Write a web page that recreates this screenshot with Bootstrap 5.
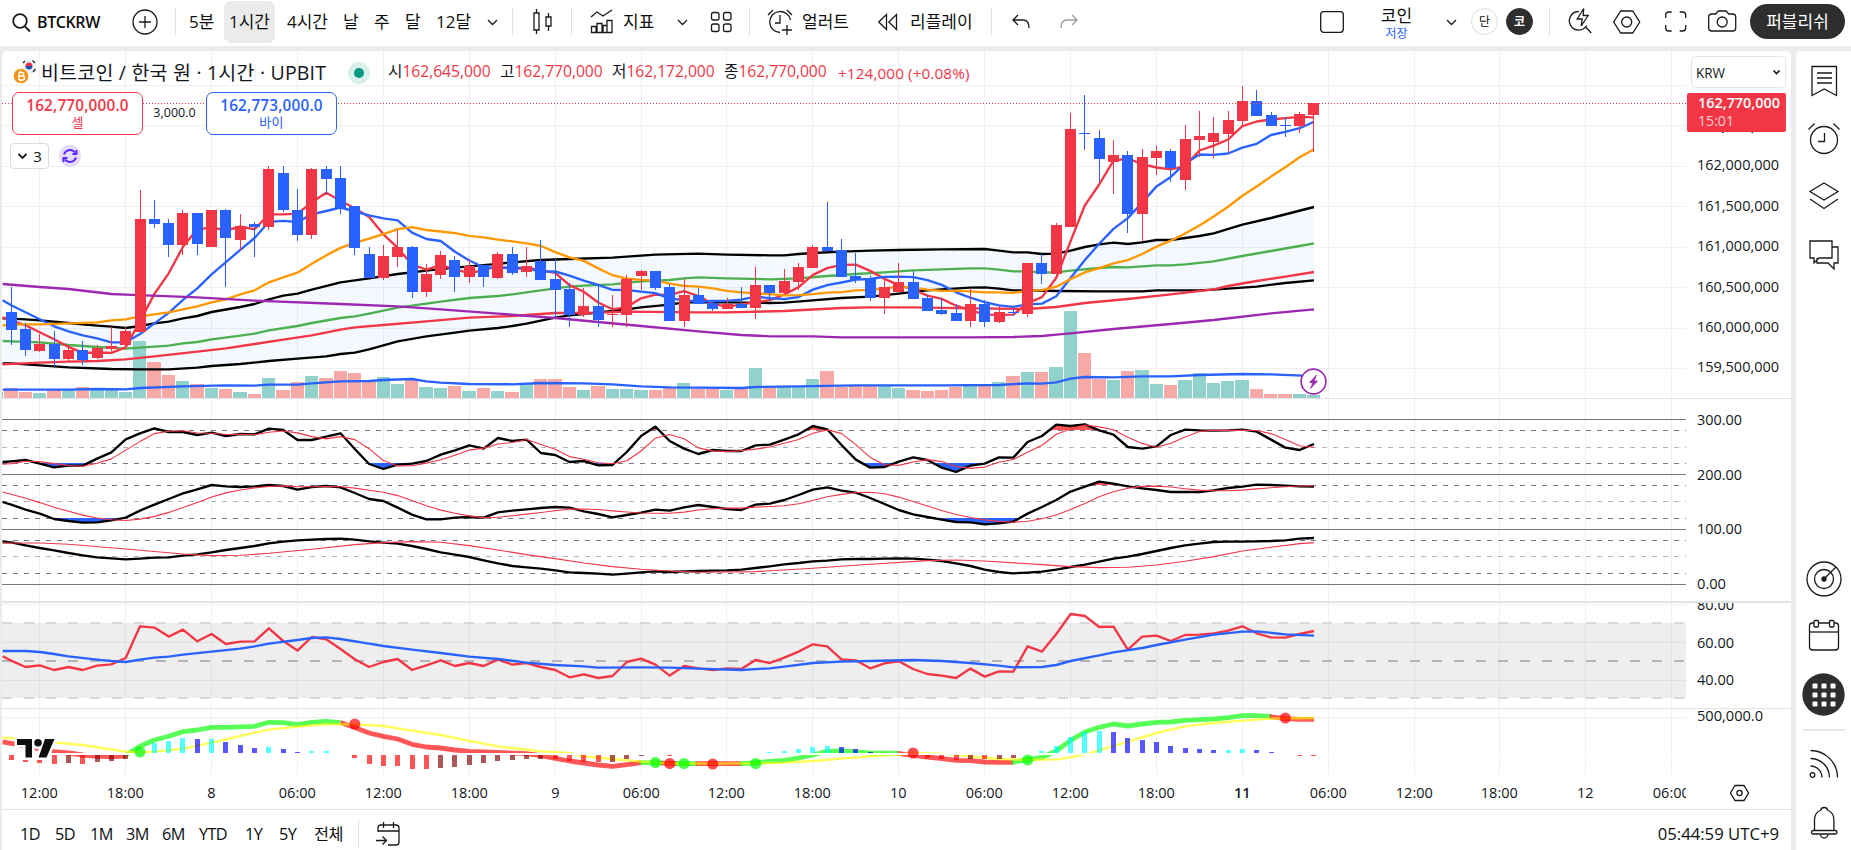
<!DOCTYPE html>
<html lang="ko">
<head>
<meta charset="utf-8">
<title>BTCKRW</title>
<link rel="stylesheet" href="https://cdn.jsdelivr.net/npm/bootstrap@5.3.0/dist/css/bootstrap.min.css">
<script src="https://cdn.jsdelivr.net/npm/bootstrap@5.3.0/dist/js/bootstrap.bundle.min.js"></script>
<style>
html,body{height:100%;overflow:hidden}
body{background:#ebebeb;font-family:"Open Sans","Noto Sans CJK KR",sans-serif;color:#0f0f0f;font-size:16px;line-height:1}
svg{display:block;fill:none;stroke:#1a1a1a;stroke-width:1.3}
svg.bare{stroke:none}
svg.swap{stroke:#5b21ff;stroke-width:1.9}
svg text{stroke:none;fill:#131722;font-size:14.5px}
.topbar{height:46px;font-weight:400;font-size:17px;padding-bottom:3px}
.topbar>*,.ranges>*{flex:none;white-space:nowrap}
.vline{width:1px;height:28px;background:#e2e2e2}
.picked{width:51px;height:42px;border-radius:7px;background:#ebebeb}
.t-sym{width:93px;font-size:16px;font-weight:600;letter-spacing:-.4px}
.t-m5{width:35px}.t-h4{width:56px}.t-d1{width:31px}.t-m12{width:51px}
.layname{width:67px;font-size:17px}
.layname small{font-size:12px;color:#2962ff}
.dot26{width:27px;height:27px;font-size:12px;border:1px solid #dcdcdc}
.dot26.dark{background:#2e2e2e;color:#fff;border-color:#2e2e2e;font-weight:600}
.publish{width:95px;height:35px;border-radius:18px;background:#2e2e2e;color:#fff;font-size:17px}
.workarea{margin-top:5px;height:799px;gap:5px;padding-left:2px}
.chartpane{width:1789px;border-radius:5px 5px 0 0;overflow:hidden}
.sidebar{width:55px;border-radius:5px 0 0 0;padding-top:1px}
.sidebar>.cell{height:57.6px}
.side-rule{width:42px;height:2px;background:#e6e6e6;margin:6px 0 4px}
.legend{left:10px;top:0;height:44px;font-size:19.5px;font-weight:400;color:#131722}
.legend .name{width:302px;letter-spacing:.2px;padding-left:3px}
.ohlc{font-size:15.7px;letter-spacing:-.05px;margin-left:-2px}
.ohlc b{font-weight:400;color:#f23645}
.ohlc .o1{width:112px}
.ohlc .o2{padding-top:2px;padding-left:2px;font-size:15.3px;letter-spacing:.1px}
.livedot{width:22px;height:22px;background:#daf0ec}
.livedot i{width:10px;height:10px;background:#089981}
.quotes{left:10px;top:41px}
.quote{width:131px;height:43px;border:1px solid;border-radius:7px;font-weight:600;font-size:15.3px;letter-spacing:.2px;gap:3px}
.quote span{font-size:13px;font-weight:400}
.sell{color:#f23645}.buy{color:#2962ff}
.spread{width:63px;font-size:12.5px;color:#131722}
.fold{left:8px;top:92px}
.fold .boxed{width:39px;height:26px;border:1px solid #dcdcdc;border-radius:4px;font-size:15px;gap:5px}
.fold .round{width:22px;height:22px;background:#e4dcfb;margin-left:10px}
.ranges{height:41px;border-top:1px solid #e3e3e6;padding-left:18px;padding-top:8px;font-size:16.3px;letter-spacing:-.6px}
.clock{letter-spacing:0;padding-right:12px;font-size:16.7px}
.r1{width:35px}.r2{width:36px}.r3{width:37px}.r4{width:46px}.r5{width:34px}
</style>
</head>
<body>
<header class="topbar bg-white d-flex align-items-center">
  <svg width="37" height="43" style="stroke-width:1.8"><circle cx="20" cy="21" r="6.8"/><path d="M25 26.5l5 5"/></svg>
  <div class="t-sym">BTCKRW</div>
  <svg width="45" height="43"><circle cx="15" cy="22" r="12"/><path d="M9 22h12M15 16v12"/></svg>
  <div class="vline"></div>
  <div class="d-flex align-items-center" style="padding-left:13px">
    <div class="t-m5">5분</div>
    <div class="picked d-flex align-items-center justify-content-center">1시간</div>
    <div class="t-h4 ps-2 ms-1">4시간</div>
    <div class="t-d1 ms-2">날</div><div class="t-d1">주</div><div class="t-d1">달</div><div class="t-m12">12달</div>
  </div>
  <svg width="25" height="43"><path d="M1 20l4.500 4.500 4.500-4.500"/></svg>
  <div class="vline"></div>
  <svg width="58" height="43"><path d="M21 13h5v17h-5zM23.500 9v4M23.500 30v4M33 17h5v9h-5zM35.500 13v4M35.500 26v5"/></svg>
  <div class="vline"></div>
  <svg width="51" height="43"><path d="M19 17l6-5 6 4 9-6M19.500 32.500v-6h4.500v6zM25 32.500v-9h5v9M31 32.500v-7h4v7M35 32.500v-12h5v12zM19 32.500h21"/></svg>
  <div style="width:54px">지표</div>
  <svg width="72" height="43"><path d="M1 20l4.500 4.500 4.500-4.500"/><rect x="34.500" y="12.500" width="7.500" height="7.500" rx="2"/><rect x="46.500" y="12.500" width="7.500" height="7.500" rx="2"/><rect x="34.500" y="24" width="7.500" height="7.500" rx="2"/><rect x="46.500" y="24" width="7.500" height="7.500" rx="2"/></svg>
  <div class="vline"></div>
  <svg width="52" height="43"><path d="M30 32.500A10.500 10.500 0 1 1 40.500 20M18 15l5-5M42 15l-5-5M30 15v8h-5M37 25v10M32 30h10"/></svg>
  <div style="width:76px">얼러트</div>
  <svg width="32" height="43"><path d="M8.500 14.500v15L.8 22zM18.500 14.500v15L10.800 22z"/></svg>
  <div style="width:81px">리플레이</div>
  <div class="vline"></div>
  <svg width="328" height="43"><path d="M26 15l-5 5 5 5M21 20h10q6 0 6 8"/><g stroke="#9a9a9a"><path d="M80 15l5 5-5 5M85 20H75q-6 0-6 8"/></g></svg>
  <svg width="43" height="43"><rect x=".7" y="11.700" width="22.600" height="20.600" rx="3"/></svg>
  <div class="layname text-center me-3"><div class="pt-1">코인</div><small class="d-block mt-1">저장</small></div>
  <svg width="25" height="43"><path d="M1 20l4.500 4.500 4.500-4.500"/></svg>
  <div class="dot26 rounded-circle d-flex align-items-center justify-content-center">단</div>
  <div class="dot26 dark rounded-circle d-flex align-items-center justify-content-center ms-2 me-3">코</div>
  <div class="vline"></div>
  <svg width="200" height="43">
    <g transform="translate(.7 0)"><path d="M28 11.500a9.300 9.300 0 1 0 8 14M35 27l5.500 6M33 8.500l-6.500 10.500h5l-1 7 7-10.500h-5z"/>
    <path d="M70 11h12l7 11-7 11H70l-7-11z"/><circle cx="76" cy="22" r="5"/>
    <path d="M115 18v-3q0-3 3-3h3M129 12h3q3 0 3 3v3M135 25v3q0 3-3 3h-3M121 31h-3q-3 0-3-3v-3"/>
    <path d="M158 17q0-3 3-3h4l2.500-3h8l2.500 3h4q3 0 3 3v11q0 3-3 3h-21q-3 0-3-3z"/><circle cx="171.500" cy="22" r="5"/></g>
  </svg>
  <div class="publish d-flex align-items-center justify-content-center">퍼블리쉬</div>
</header>

<main class="workarea d-flex">
  <section class="chartpane bg-white d-flex flex-column position-relative">
    <svg id="chart" width="1789" height="758" viewBox="2 51 1789 758"></svg>
    <div class="legend position-absolute d-flex align-items-center">
      <svg class="bare" width="26" height="28"><circle cx="17" cy="8" r="7.500" fill="#f0f1f5"/><path d="M13.500 7a3.500 3.500 0 0 1 7 0z" fill="#e8304a"/><path d="M13.500 7a3.500 3.500 0 0 0 7 0z" fill="#2450b8"/><path d="M11 4l2-2M20.500 1.500l2.500 2.500M21 13l2.500-3" stroke="#333" stroke-width="1.500"/><circle cx="9" cy="17" r="8" fill="#f7931a" stroke="#fff"/><path d="M7 13.500v7.500M7 13.500h3a1.700 1.700 0 0 1 0 3.500H7h3.500a2 2 0 0 1 0 4H7M8.500 11.500v2M8.500 21v1.500" stroke="#fff" stroke-width="1.400"/></svg>
      <div class="name">비트코인 / 한국 원 · 1시간 · UPBIT</div>
      <div class="livedot rounded-circle d-flex align-items-center justify-content-center ms-2 me-3"><i class="rounded-circle"></i></div>
      <div class="ohlc d-flex ps-1"><div class="o1">시<b>162,645,000</b></div><div class="o1">고<b>162,770,000</b></div><div class="o1">저<b>162,172,000</b></div><div class="o1">종<b>162,770,000</b></div><div class="o2"><b>+124,000 (+0.08%)</b></div></div>
    </div>
    <div class="quotes position-absolute d-flex align-items-center">
      <div class="quote sell bg-white d-flex flex-column align-items-center justify-content-center">162,770,000.0<span>셀</span></div>
      <div class="spread text-center">3,000.0</div>
      <div class="quote buy bg-white d-flex flex-column align-items-center justify-content-center">162,773,000.0<span>바이</span></div>
    </div>
    <div class="fold position-absolute d-flex align-items-center">
      <div class="boxed bg-white d-flex align-items-center justify-content-center"><svg width="11" height="8" style="stroke-width:1.800"><path d="M1.500 2l4 4 4-4"/></svg>3</div>
      <div class="round rounded-circle d-flex align-items-center justify-content-center"><svg class="swap" width="18" height="18"><path d="M3 7.500a6.300 6.300 0 0 1 11-2M15 10.500a6.300 6.300 0 0 1-11 2M15.500 3v4h-4M2.500 15v-4h4"/></svg></div>
    </div>
    <footer class="ranges d-flex align-items-center">
      <div class="r1">1D</div><div class="r1">5D</div><div class="r2">1M</div><div class="r2">3M</div><div class="r3">6M</div><div class="r4">YTD</div><div class="r5">1Y</div><div class="r1">5Y</div><div style="width:44px">전체</div>
      <div class="vline"></div>
      <svg width="60" height="38"><path d="M19 17v-4q0-3 3-3h15q3 0 3 3v14q0 3-3 3h-8M19 16h21M24.500 7v6M34.500 7v6M17 25.500h10M23.500 21.500l4 4-4 4"/></svg>
      <div class="clock ms-auto">05:44:59 UTC+9</div>
    </footer>
  </section>

  <aside class="sidebar bg-white d-flex flex-column align-items-center">
    <div class="cell d-flex align-items-center"><svg width="36" height="36"><path d="M6 3.500h24.500v29l-12.300-6.500L6 32.500zM11 10h15M11 15h15M11 20h15"/></svg></div>
    <div class="cell d-flex align-items-center"><svg width="36" height="36"><circle cx="18" cy="20" r="13.500"/><path d="M18.500 13v8.500H12M2.500 9.500l6-6M33.500 9.500l-6-6"/></svg></div>
    <div class="cell d-flex align-items-center"><svg width="36" height="36"><path d="M18 5l14 8.500-14 8.500-14-8.500zM4 21l14 9.500L32 21"/></svg></div>
    <div class="cell d-flex align-items-center"><svg width="36" height="36"><path d="M4 5h22v17H13l-5 5v-5H4zM11 22v5h11l6 6v-6h4V11h-6"/></svg></div>
    <div class="cell d-flex align-items-center mt-auto"><svg width="36" height="36"><circle cx="18" cy="18" r="17"/><circle cx="18" cy="18" r="9.500"/><circle cx="18" cy="18" r="2" fill="#1a1a1a"/><path d="M18 18L30 6"/></svg></div>
    <div class="cell d-flex align-items-center"><svg width="36" height="36"><rect x="3.500" y="5" width="29" height="27" rx="3"/><path d="M3.500 14h29"/><rect x="8" y="2.500" width="4.500" height="6.500" rx="1" fill="#fff"/><rect x="23.500" y="2.500" width="4.500" height="6.500" rx="1" fill="#fff"/></svg></div>
    <div class="cell d-flex align-items-center"><svg class="bare" width="43" height="43"><circle cx="21.500" cy="21.500" r="21.200" fill="#2e2e2e"/><g fill="#fff" id="nine"></g></svg></div>
    <div class="side-rule"></div>
    <div class="cell d-flex align-items-center"><svg width="36" height="36"><circle cx="6.500" cy="29" r="2.300"/><path d="M4.500 20a11.500 11.500 0 0 1 11.500 11.500M4.500 12.500a19 19 0 0 1 19 19M4.500 4.500a27 27 0 0 1 27 27"/></svg></div>
    <div class="cell d-flex align-items-center"><svg width="36" height="36"><g transform="translate(0 1.500)"><path d="M8.500 26V15q0-7 6.500-9.500 0-2.500 3.200-2.500t3.200 2.500q6.500 2.500 6.500 9.500v11"/><rect x="5.500" y="26" width="25.500" height="3.500" rx="1.700"/><path d="M14.500 30q.5 3.500 3.700 3.500T22 30"/></g></svg></div>
  </aside>
</main>

<script>
const RED='#f23645',BLUE='#2962ff',X0=10.7,STEP=14.316,R=1686,LW=2.35;
const px=i=>X0+STEP*i, c=i=>Math.round(px(i));
let out='';
const add=s=>out+=s;
const rect=(x,y,w,h,f,o='')=>add(`<rect x="${x}" y="${y}" width="${w}" height="${h}" fill="${f}" stroke="none" ${o}/>`);
const hl=(y,col,w=1,dash='',x2=R)=>add(`<path d="M2 ${y}H${x2}" stroke="${col}" stroke-width="${w}" ${dash?`stroke-dasharray="${dash}"`:''}/>`);
const text=(x,y,s,o='')=>add(`<text x="${x}" y="${y}" ${o}>${s}</text>`);
const pts=a=>a.map(([i,y])=>(px(i)+.5).toFixed(1)+','+(y+.3).toFixed(1)).join(' ');
const line=(a,col,w,o='')=>add(`<polyline points="${pts(a)}" stroke="${col}" stroke-width="${w}" stroke-linejoin="round" ${o}/>`);
const sp=s=>s.trim().split(/\s+/).map(p=>p.split(':').map(Number));
const num=s=>s.trim().split(/[\s,]+/).map(Number);
const seq=(a,f=v=>v)=>a.map((v,i)=>[i,f(v)]);

// colour, high, body top, body bottom, low
const candles=`b287,312,330,345 b323,329,350,356 r334,344,351,352 b331,344,359,366 r347,350,359,361 b341,350,360,365 r345,348,358,359 r327,346,349,351 r327,331,345,346 r190,219,332,332
b200,219,224,228 b219,223,245,257 r210,213,245,255 b213,213,244,255 r210,210,247,247 b209,210,238,287 r214,226,240,251 b222,224,227,257 r166,169,227,230 b166,173,210,212
b189,210,235,241 r168,169,235,239 b166,169,179,194 b166,178,209,214 b206,206,248,255 b247,254,278,278 r245,256,278,280 r230,247,257,267 b246,247,292,298 r264,274,292,297
r251,255,275,279 b256,260,277,292 r259,266,277,283 b265,265,277,287 r252,254,278,279 b247,254,273,275 r247,266,272,277 b240,261,280,280 b259,279,290,317 b283,289,315,327
r288,306,315,317 b284,306,320,327 r295,314,315,327 r275,279,315,327 r270,271,276,290 b271,271,288,290 b284,287,321,321 r279,295,321,327 b288,295,304,304 b302,303,309,311
r298,304,309,309 b287,304,308,308 r267,285,308,319 b285,285,293,301 r269,281,293,294 r263,267,282,290 r245,247,268,268 b202,247,251,251 b239,250,277,277 b253,276,280,283
b276,279,298,301 r278,287,298,314 r263,282,292,292 b271,282,299,299 b295,298,311,311 b298,310,314,315 b304,313,321,321 r288,304,321,327 b300,304,322,327 r306,312,322,323
b307,312,313,316 r263,263,314,317 b254,263,274,284 r223,225,274,274 r113,129,227,227 b95,133,134,150 b130,138,159,182 r140,155,162,194 b151,155,214,233 r149,157,214,241
r146,151,158,175 b149,151,168,182 r125,139,180,190 r111,136,140,157 r117,133,142,158 r111,120,134,153 r86,101,121,125 b90,101,116,116 b112,115,126,126 b117,125,126,137 r112,114,126,133 r103,103,115,152`
.trim().split(/\s+/).map(s=>[s[0],...s.slice(1).split(',').map(Number)]);
const close=candles.map(k=>k[0]=='r'?k[2]:k[3]);
const sma=(src,n,head)=>src.map((_,i)=>[i,i<head.length?head[i]:src.slice(i-n+1,i+1).reduce((a,b)=>a+b)/n]);

// grid
const gx=[39,125,211,297,383,469,555,641,726,812,898,984,1070,1156,1242,1328,1414,1499,1585,1671];
gx.forEach(x=>rect(x,51,1,724,'#f0f0f1'));
[85,125,166,206,247,287,328,368,604,642,680,717].forEach(y=>rect(2,y,R-2,1,'#f0f0f1'));

// main pane overlays
const up=sp(`-.6:318 0:318.3 1:319 2:320 4:322.7 6:325.3 7:326.3 8:327.7 9:325.7 10:323 11:321.3 12:318 13:315.7 14:311.7 16:306.7 17:303.7 18:299 19:295.3 20:293.3 21:289.3 23:282 25:278 27:273.7 29:270.3 31:267.3 34:263.5 35:262 37:259.7 39:258.7 42:257.3 43:256.3 45:254.3 48:253.3 50:254.3 53:255 54:255 55:253.7 56:252.7 58:251.3 60:250.3 62:249.7 65:249 68:248.7 69:250.3 70:252 71:252 72:253.7 73:253.3 74:250.3 75:246.7 76:244 77:242.3 78:243.7 79:242 80:239.7 81:239.7 82:237.7 83:235.7 84:233 86:224.3 88:217.7 91:206.7`);
const lo=sp(`-.6:363 0:363 2:365 4:367 7:368.7 9:369 11:369 13:367.3 14:365.7 16:363.7 18:360.7 20:358.3 22:356 23:353.7 24:352.3 25:349 27:341 29:336 31:332.3 32:330.3 34:327.7 35:325.7 36:323.3 37:320.3 38:317.3 39:315 40:313.7 41:312 42:310.7 43:309 44:307 46:304.3 47:302 50:302 53:302.7 54:302.3 56:300 58:297.7 60:296.3 62:293.3 64:290 65:289 67:287.3 68:287 69:288.3 70:290 71:290 73:290.7 76:291 79:291 80:290 83:290 84:289.3 87:286.3 89:282.7 91:280`);
add(`<polygon points="${pts(up)} ${pts([...lo].reverse())}" fill="#2196f3" fill-opacity=".055" stroke="none"/>`);
const vol=`r388 r392 g393 r390 g390 r387 g390 g390 g392 g341 r362 r375 g381 r384 g388 r389 g392 r394 g378 r390 r382 g376 r378 r371 r373 r380 g377 g384 r380 g387 g388 r386 g391 r388 g391 r392 g384 r379 r379 r387 g390 r386 g389 g389 g390 r390 r387 g383 r389 r389 g390 r389 g368 r387 g387 g387 g379 r371 r387 r386 r386 g386 g388 r390 r391 r390 r387 g386 r385 g382 r376 g372 r372 g367 g311 r353 r379 g380 r371 g370 g384 r385 g380 g373 g383 g381 g380 r389 r394 r394 g394 g395`.split(' ');
rect(2,392,1,6,'#92d2cc');
vol.forEach((v,i)=>{const x=Math.round(px(i)-6.4),n=Math.round(px(i+1)-6.4),y=+v.slice(1);rect(x,y,n-x-1,398-y,v[0]=='r'?'#f7a9a7':'#92d2cc')});
line(sp(`-.6:389.3 4:389.3 6:388.7 8:389 9:387.7 12:386 15:385 17:385.3 18:384.3 20:384.3 21:383 23:381 25:380.7 26:379.7 28:378.7 29:381 30:382.3 32:383.7 35:384 37:382.7 40:383 42:384 44:386 46:387 51:387.7 52:386.7 55:386 59:385 65:385 69:384.7 71:383 72:383.3 73:382 74:378.3 75:376.7 77:377 79:376 81:376 83:374.7 86:373.7 88:374 90.2:375.3`),BLUE,LW);
line(up,'#000',LW);line(lo,'#000',LW);
line(sp(`-.6:340.7 0:341 2:342 4:344.7 6:346.7 8:348.3 9:347.3 11:345.3 12:343 13:341.7 14:339 16:335.3 17:333.3 18:330 20:325.7 21:322.7 23:317.7 24:316 25:313.3 27:307.3 28:305.3 30:301.3 32:297.7 34:295.7 35:294 36:292 38:288 39:286.3 40:285.3 42:284 44:281 46:279.7 47:278 48:277 50:278 53:279 55:278 57:275.7 59:273.7 61:272 63:270 65:269 67:268 68:268 69:269.3 70:271 71:271 72:272 73:272 74:270.3 76:267.7 77:266.7 78:267 80:265 81:265 82:264 84:261 86:255.7 88:250.7 90:245.7 91:243`),'#4caf50',LW);
line([[-.6,317],...sma(close,5,[320,325,332,339])],RED,LW);
line([[-.6,300],...sma(close,10,[305,312,319,326,331,335,338,342,342])],BLUE,LW);
line([[-.6,325],...sma(close,20,[324.5,324,324,323.5,323,322.5,322,320,319,316,314,312,309,306,302,299,294,290,282])],'#ff9800',LW);
line(sp(`-.6:364 2:362.3 4:361.3 6:360.7 8:359 10:356 13:351.3 15:348 17:343.7 19:339.3 21:335 23:329.3 24:327 26:324.7 29:321 32:317.3 35:315.7 38:312.7 41:312.3 43:311.3 48:312 50:312 54:310.7 58:307.7 60:307 63:307 67:308 71:308.7 73:306.7 75:302.7 78:298.7 81:294 84:289 85:285.7 87:280.7 89:276.3 91:271.7`),RED,LW);
line(sp(`-.6:283.7 2:286.7 4:288.7 7:293.7 8:294.3 13:297 17:300.3 23:303.7 27:306 30:309 34:313.3 38:317.7 44:325.7 48:331 51:334.7 53:336 56:336 58:337 67:337 70:336.7 72:335.7 73:334.3 74:333 77:328.7 81:323.7 84:319.7 88:313 91:309`),'#9c27b0',LW);
candles.forEach(([k,h,t,b,l],i)=>{const f=k=='r'?RED:BLUE;rect(c(i),h,1,Math.max(1,l-h),f);rect(c(i)-5,t,11,Math.max(1,b-t),f)});
add(`<path d="M2 103.500H${R}" stroke="${RED}" stroke-width="1" stroke-dasharray="1 2"/>`);
add(`<circle cx="1313.500" cy="381.500" r="12.400" fill="#fff" stroke="#9c27b0" stroke-width="1.600"/><path d="M1316.500 375l-7 7.500h3.500l-2.500 6 7-7.500h-3.500l2.500-6z" fill="#9c27b0" stroke="#9c27b0" stroke-width=".8"/>`);
hl(398.5,'#e0e3eb',1,'',1791);

// stochastic pane
[[430.5,447.5,463.5],[485.5,501.5,518.5],[540.5,556.5,573.5]].forEach(r=>r.forEach((y,j)=>hl(y,j==1?'#b2b2b8':'#787885',1,'5 6')));
const K1=num(`183,179,190,201,196,196,175,156,117,99,84,95,95,104,97,107,101,102,85,89,119,119,109,99,146,191,206,193,190,182,163,150,135,145,113,122,118,158,164,185,182,195,194,155,107,79,122,145,161,149,152,152,135,133,118,102,77,87,134,178,202,200,184,171,179,202,215,196,190,171,172,125,107,73,77,72,90,103,140,145,138,104,88,90,91,90,88,94,118,142,149,131`);
const K2=num(`313,328,340,356,362,367,366,360,352,331,313,296,279,267,254,258,260,258,254,257,268,260,257,261,278,296,302,322,343,357,357,352,350,352,336,331,327,323,320,322,333,341,351,344,337,328,331,321,314,320,326,329,313,310,299,284,268,261,271,277,293,311,329,342,350,358,365,366,372,369,364,340,320,299,274,259,244,250,258,264,269,275,275,275,270,263,259,253,254,256,258,259`);
const K3=num(`426,435,443,450,458,465,471,474,477,475,472,471,466,462,456,449,443,437,429,424,420,418,416,415,418,423,427,430,437,446,456,463,470,480,489,497,501,505,510,516,518,520,523,520,516,513,515,513,512,511,510,508,503,498,492,488,483,481,477,476,476,475,474,475,478,482,489,497,508,515,519,517,514,508,500,493,484,475,469,461,452,443,435,430,425,424,424,423,422,420,415,413`);
const z=v=>400+v/3;
add(`<defs><clipPath id="u1"><path d="M2 419H1400V430H2z"/></clipPath><clipPath id="d1"><path d="M2 463H1400V474H2z"/></clipPath><clipPath id="u2"><path d="M2 475H1400V485H2z"/></clipPath><clipPath id="d2"><path d="M2 518H1400V529H2z"/></clipPath></defs>`);
[[K1,430,463,1],[K2,485,518,2]].forEach(([k,t,b,n])=>{const p=pts(seq(k,z));
 add(`<polygon points="${px(0)},${t} ${p} ${px(91)},${t}" fill="#ff5252" stroke="none" clip-path="url(#u${n})"/><polygon points="${px(0)},${b} ${p} ${px(91)},${b}" fill="${BLUE}" stroke="none" clip-path="url(#d${n})"/>`)});
const lead=(a,y)=>[[-.6,z(y)],...a];
line(lead(seq(K1,z),185),'#000',LW);line(lead(seq(K2,z),305),'#000',LW);line(lead(seq(K3,z),425),'#000',LW);
line(lead(sma(K1,3,[190,183]).map(([i,v])=>[i,z(v)]),192),RED,1.1);
line(lead(sma(K2,6,[282,294,307,321,333]).map(([i,v])=>[i,z(v)]),275),RED,1.1);
line(sp(`-.6:428 2:428 4:432 8:446 12:461 14:466 16:465 18:459 21:447 24:433 26:427 28:424 30:426 32:436 34:449 36:463 38:475 40:488 42:499 44:507 46:512 48:516 52:514 56:504 60:492 64:481 66:479 68:482 72:493 74:499 76:502 78:501 80:494 82:483 84:469 86:452 88:441 90:430 91:427`).map(([i,v])=>[i,z(v)]),RED,1.1);
[419.5,474.5,529.5,584.5].forEach(y=>hl(y,'#787885'));
hl(602,'#e0e3eb',2,'',1791);

// RSI pane
rect(2,623,R-2,75,'#000','fill-opacity=".065"');
hl(623,'#d8d8da',2,'10 12');hl(661,'#b4b4b9',2,'10 12');hl(698,'#d8d8da',2,'10 12');
line(lead(seq(num(`781,800,795,809,800,809,796,792,773,678,682,709,688,723,701,731,724,723,684,722,751,710,717,746,777,800,785,776,809,795,780,797,788,797,778,793,788,800,809,831,822,833,827,785,775,793,826,797,804,809,804,806,779,788,772,754,732,738,777,780,804,789,783,806,821,826,833,805,829,813,814,738,754,701,641,647,680,679,748,709,706,722,704,703,699,691,678,699,711,712,701,692`),z),768),RED,LW);
line(sp(`-.6:752 1:752 2:755 3:761 4:768 6:778 7:782 8:785 9:778 10:772 11:769 12:763 14:754 16:745 17:738 18:730 20:719 21:713 22:711 23:716 25:730 26:737 28:748 30:758 32:769 34:776 36:787 38:794 40:798 41:802 44:801 46:802 48:805 51:809 53:804 54:799 56:788 58:784 60:782 63:779 65:782 67:788 69:796 70:801 72:800 73:794 74:782 76:765 77:756 79:743 80:734 82:718 84:703 86:694 87:693 89:702 91:706`).map(([i,v])=>[i,z(v)]),BLUE,LW);
hl(708.5,'#e0e3eb',1,'',1791);

// MACD pane
const G='#00ff00',F='#ff0000',op='stroke-opacity=".66"';
const macd=[[F,`-.6:741.5 0:743 3:751.3 4:752.7 5:754.7 6:756 7:756.3 8:755.7`],[G,`8:755 9:746 10:739.7 11:736 12:731.3 13:729.7 14:727 15:727 17:726 18:722 19:722.3 20:724.3 21:722 22:721 23:722.3`],[F,`23:722.3 24:727.3 25:732.7 26:736 27:738.7 28:744 29:746.7 30:747.7 31:749.7 32:751 33:751.5 36:753.3 37:755.3 38:758 39:760.7 40:762.7 41:764.7 42:766 43:764.3 44:762.3`],[G,`43.9:762.3 45.5:762.6`],[F,`45.4:762.8 46.5:763.3`],[G,`46.4:763.3 47.9:763.3`],[F,`47.8:763.3 51:763.3`],[G,`50.9:763.3 52:762.5 53:761 54:760 55:757.7 56:754.7 57:751 58:750.7 59:751.7 60:752.7 62:753`],[F,`61.9:753 63:755 64:756.7 65:758.3 66:760 67:760.3 68:761.7 69:762 70:762`],[G,`69.9:762 71:759.3 72:757 73:750.7 74:740 75:731.7 76:727 77:723.7 78:725.7 79:723.7 80:722 81:721.7 82:720 83:719.3 84:718.7 85:717.3 86:715.3 87:715.3 88:716`],[F,`87.9:716.2 89:718.3 90:719 91:719`]];
macd.forEach(([col,s])=>line(sp(s),col,4.8,op));
line(sp(`-.6:737.3 1:738.5 3:742 5:744.7 8:751.3 9:752 10:751.3 11:750 12:748.3 13:745.3 14:742.3 15:739 16:735.7 17:732.3 18:729.3 20:726.3 22:724 24:724 26:725.7 28:730.3 30:734.7 32:740.5 34:746 35:747.7 37:751 39:752.7 40:756 42:758.7 44:761.3 46:763.3 48:763.3 52:763 54:762.3 56:760.7 58:758.3 60:756 62:754.3 63:752.7 65:753.3 67:756 69:758.7 71:759.7 73:759 74:757 75:754 76:750 78:741.3 80:732.7 82:726 84:722.7 86:720.3 88:718.3 91:717.7`),'#ffff00',LW,op);
const hc={r:'#ff0000',d:'#800000',c:'#00ffff',b:'#0000ff'};
`0r760 1r762 2r763 3r764 4d763 5r764 6d762 7d761 8d759 10c743 11c741 12c738 13b739 14c739 15b742 16b745 17b748 18c747 19b749 20b752 21c751 22c751 24r758 25r764 26r766 27r766 28r769 29r769 30d768 31d767 32d765 33d763 34d761 35d760 36d759 37d759 38r759 39r761 40r762 41r762 42d762 43d759 44d756 46r756 53c752 54c751 55c749 56c747 57c746 58b747 59b749 60b752 64r758 65r759 66r760 67d759 68r759 69d759 70d758 72c751 73c746 74c737 75c732 76c731 77b732 78b738 79b740 80b742 81b746 82b748 83b749 84b750 85c750 86c749 87b750 88b752 90r756 91r756`.split(' ').forEach(s=>{const m=s.match(/(\d+)([a-z])(\d+)/),y=+m[3];rect(c(+m[1])-2,y<754?y:755,5,y<754?753-y:y-755,hc[m[2]],'fill-opacity=".66"')});
rect(2,753,R-2,2,'#fff');
[[9,752,G],[24,724,F],[45,762.5,G],[46,763.5,F],[47,763.5,G],[49,764,F],[52,763.5,G],[63,753,F],[71,760,G],[89,718,F]].forEach(([i,y,col])=>add(`<circle cx="${px(i)+.5}" cy="${y}" r="5.500" fill="${col}" fill-opacity=".7" stroke="none"/>`));
const logo=`<path d="M17 739h15v18.500h-6.500V745H17zM45 739h9.500l-8 18.500h-8z"/><circle cx="38" cy="742.700" r="3.800"/>`;
add(`<g stroke="#fff" stroke-width="5" fill="#fff">${logo}</g><g stroke="none" fill="#0f0f0f">${logo}</g>`);

// time axis
const names=['12:00','18:00','8','06:00','12:00','18:00','9','06:00','12:00','18:00','10','06:00','12:00','18:00','11','06:00','12:00','18:00','12','06:00'];
add('<defs><clipPath id="ta"><path d="M2 776H1686V809H2z"/></clipPath></defs><g clip-path="url(#ta)">');
gx.forEach((x,i)=>text(x+.3,797.5,names[i],`text-anchor="middle" ${names[i].length>2?'textLength="37" lengthAdjust="spacingAndGlyphs"':''} ${names[i]=='11'?'font-weight="600"':''}`));
add('</g><path d="M1735 785.500h9l4.500 7.500-4.500 7.500h-9l-4.500-7.500z"/><circle cx="1739.500" cy="793" r="2.600"/>');

// price axis
const tl=w=>`textLength="${w}" lengthAdjust="spacingAndGlyphs"`;
[['162,000,000',170],['161,500,000',211],['161,000,000',251],['160,500,000',292],['160,000,000',332],['159,500,000',372]].forEach(([s,y])=>text(1697,y,s,tl(82)));
[['300.00',425,45],['200.00',480,45],['100.00',534,45],['0.00',589,29],['60.00',648,37],['40.00',685,37],['500,000.0',721,66]].forEach(([s,y,w])=>text(1697,y,s,tl(w)));
add('<defs><clipPath id="cut"><path d="M1690 603H1790V625H1690z"/></clipPath></defs>');
text(1697,610,'80.00',tl(37)+' clip-path="url(#cut)"');
rect(1687,93,99,39,RED,'rx="2"');
rect(1722,132,1.5,1,'#131722');rect(1751.5,132,1.5,1,'#131722');
text(1698,108,'162,770,000',tl(82)+' font-weight="600" style="fill:#fff"');
text(1698,126,'15:01',tl(36)+' style="fill:#fff;opacity:.75"');
add('<rect x="1691.500" y="56.500" width="94" height="31" rx="4" fill="#fff" stroke="#e4e4e7" stroke-width="1"/>');
text(1696,77.5,'KRW',tl(29));
add('<path d="M1773.500 70.500l3 3 3-3" stroke-width="1.700"/>');
document.getElementById('chart').innerHTML=out;
let g='';for(let a=0;a<3;a++)for(let b=0;b<3;b++)g+=`<rect x="${10.500+a*9}" y="${10.500+b*9}" width="5" height="5" rx="1"/>`;
document.getElementById('nine').innerHTML=g;
</script>
</body>
</html>
